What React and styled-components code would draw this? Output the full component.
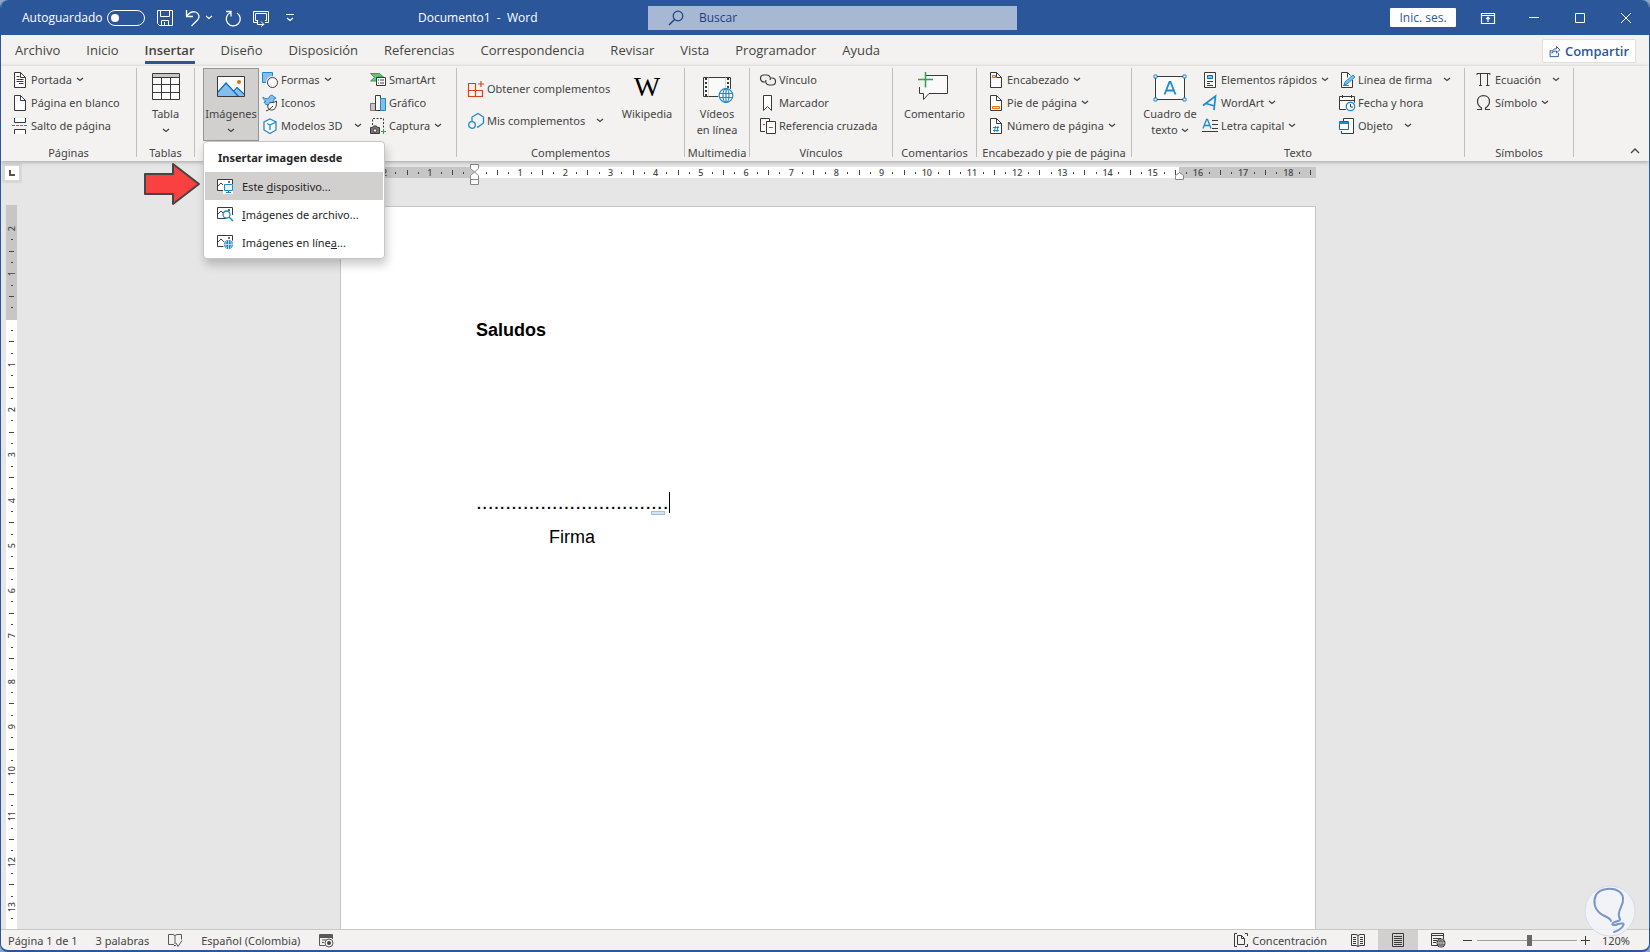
import styled, { createGlobalStyle, css } from "styled-components";

const GlobalStyle = createGlobalStyle`
  * {
    box-sizing: border-box;
  }
  body {
    margin: 0;
    background: #8fa6cb;
    font-family: "Open Sans", "Noto Sans", sans-serif;
    font-size: 12px;
    color: #444444;
  }
  button, input {
    font: inherit;
    color: inherit;
  }
  button {
    padding: 0;
    border: none;
    background: none;
    white-space: nowrap;
  }
`;

const ink = "#3b3a39";
const blue = "#1e8bcd";
const lightBlue = "#83beec";
const green = "#35a04a";
const orange = "#e8710a";

/* ---------- icons ---------- */

const icons = {
  cover: (
    <>
      <path d="M2.5.5h6l5 5v10h-11z" fill="#fff" stroke={ink} />
      <path d="M8.5.5v5h5M4.5 4.5h3M4.5 7.5h7M4.5 9.5h7M7 11.5h4.5" stroke={ink} />
    </>
  ),
  blank: (
    <>
      <path d="M2.5.5h6l5 5v10h-11z" fill="#fff" stroke={ink} />
      <path d="M8.5.5v5h5" stroke={ink} />
    </>
  ),
  pageBreak: (
    <>
      <path d="M2.5 0v4.5h11V0M2.5 16v-4.5h11V16" fill="#fff" stroke={ink} />
      <path d="M0 7.5h16" stroke={blue} strokeDasharray="3 1" />
    </>
  ),
  shapes: (
    <>
      <path d="M.5.5h10v10H.5z" fill={lightBlue} stroke={blue} />
      <circle cx="10.5" cy="10.5" r="6.5" fill="#f3f2f1" />
      <circle cx="10.5" cy="10.5" r="5" fill="#fafafa" stroke={ink} />
    </>
  ),
  iconSet: (
    <>
      <path
        d="M1 2c2 2 4 2 6 1 0-3 4-4 5-1l2 1-2 1c0 3-2 5-5 6-3 0-4-1-5-3l2-.5C2 5 1 4 1 2z"
        fill={lightBlue}
        stroke={blue}
      />
      <path d="M14.5 6c0 6-1 9-5 9s-5-5-2-7c2-1 5 0 7-2z" fill="#fafafa" stroke={ink} />
      <path d="M4 16c3-1 5-3 7-5" stroke={ink} />
    </>
  ),
  cube: (
    <>
      <path d="M8 1l6 3v8l-6 3.5L2 12V4z" fill="#fff" stroke={blue} strokeWidth="1.3" />
      <path d="M5 5.5L8 7l6-3M8 7v5" stroke={blue} strokeWidth="1.3" />
    </>
  ),
  smartArt: (
    <>
      <path d="M.5 1.5h9l4 3.5h-7v4H.5l4-3.5z" fill="#6cc07c" stroke={green} />
      <path d="M6.5 5.5h9v8h-9z" fill="#fff" stroke={ink} />
      <path d="M8 8h1M10 8h4M8 11h1M10 11h4" stroke={ink} />
    </>
  ),
  chart: (
    <>
      <path d="M.5 8.5h5v7h-5z" fill="#c8c6c4" stroke="#797775" />
      <path d="M5.5.5h5v15h-5z" fill="#fff" stroke={ink} />
      <path d="M10.5 3.5h5v12h-5z" fill={lightBlue} stroke={blue} />
    </>
  ),
  capture: (
    <>
      <path d="M2.5 7V.5h11V10" stroke={ink} strokeDasharray="2 1.5" />
      <path d="M.5 9.5h2l1-1.5h3l1 1.5h2v6h-9z" fill="#797775" stroke={ink} />
      <circle cx="5" cy="12.5" r="1.7" fill="#fff" stroke={ink} />
      <path d="M13.5 11v5M11 13.5h5" stroke={green} />
    </>
  ),
  addins: (
    <path d="M.5 2.5h7v13h-7zM.5 9.5h14v6h-14zM7.5 9.5v6M13 0v6M10 3h6" stroke="#d9461a" strokeWidth="1.2" />
  ),
  myAddins: (
    <>
      <path d="M4 8V4l6-3.5L15.5 4v6L10 14H9" stroke={blue} strokeWidth="1.3" />
      <circle cx="4" cy="12" r="3.3" fill="#f3f2f1" stroke={blue} strokeWidth="1.3" />
    </>
  ),
  link: (
    <g stroke={ink} strokeWidth="1.2">
      <path d="M5 10H4a3.5 3.5 0 010-7h3a3.5 3.5 0 013 5" />
      <path d="M11 6h1a3.5 3.5 0 010 7H9a3.5 3.5 0 01-3-5" />
    </g>
  ),
  bookmark: <path d="M3.5.5h8v15l-4-4-4 4z" fill="#fff" stroke={ink} />,
  crossRef: (
    <>
      <path d="M5 13.5H.5V.5h9V3" fill="#fff" stroke={ink} />
      <path d="M6.5 3.5h9v12h-9z" fill="#fff" stroke={ink} />
      <path d="M3 6.5h2M9 9.5h4" stroke="#e33b2e" />
    </>
  ),
  header: (
    <>
      <path d="M2.5.5h6l5 5v10h-11z" fill="#fff" stroke={ink} />
      <path d="M8.5.5v5h5" stroke={ink} />
      <path d="M4.5 3.5h3v2h-3z" fill="#ffd9a8" stroke={orange} />
    </>
  ),
  footer: (
    <>
      <path d="M2.5.5h6l5 5v10h-11z" fill="#fff" stroke={ink} />
      <path d="M8.5.5v5h5" stroke={ink} />
      <path d="M4.5 11.5h7v2h-7z" fill="#ffd9a8" stroke={orange} />
    </>
  ),
  pageNumber: (
    <>
      <path d="M2.5.5h6l5 5v10h-11z" fill="#fff" stroke={ink} />
      <path d="M8.5.5v5h5" stroke={ink} />
      <path d="M7.5 8L6.5 14M10 8L9 14M5 9.5h6M5 12.5h6" stroke={blue} />
    </>
  ),
  quickParts: (
    <>
      <path d="M2.5.5h11v15h-11z" fill="#fff" stroke={ink} />
      <path d="M5.5 3.5h5v3h-5z" fill={lightBlue} stroke="#0f6cbd" />
      <path d="M5 9.5h6M5 11.5h3M5 13.5h6" stroke={ink} />
    </>
  ),
  wordArt: <path d="M1 10.5L13.5 1 12 15M4 8.500l8.500 2.500" stroke={blue} strokeWidth="1.7" />,
  dropCap: (
    <>
      <path d="M1 10.5L4.5 1.5h1L9 10.5M2 7.5h6" stroke={blue} strokeWidth="1.3" />
      <path d="M10 2.5h6M10 6.5h6M10 10.5h6M0 13.5h16" stroke={ink} />
    </>
  ),
  signature: (
    <>
      <path d="M13.5 8v7.5h-11V.5h6l3 3" fill="#fff" stroke={ink} />
      <path d="M8.5.5v5" stroke={ink} />
      <path d="M5 13l1-3 8-7 2 2-8 7z" fill={lightBlue} stroke={blue} />
      <path d="M4 13.5h6" stroke={blue} />
    </>
  ),
  dateTime: (
    <>
      <path d="M.5 1.5h15v13H.5z" fill="#fff" stroke={ink} />
      <path d="M.5 5.5h15M3.5 0v3M12.5 0v3" stroke={ink} />
      <circle cx="11.5" cy="11.5" r="5.5" fill="#f3f2f1" />
      <circle cx="11.5" cy="11.5" r="4.2" fill="#fff" stroke={blue} strokeWidth="1.3" />
      <path d="M11.5 9v3H14" stroke={ink} />
    </>
  ),
  object: (
    <>
      <path d="M4.5 3V.5h10v15h-12V13" fill="#fff" stroke={ink} />
      <path d="M.5 3.5h9v8h-9z" fill="#fff" stroke="#0f6cbd" />
      <path d="M.5 5h9" stroke={blue} strokeWidth="2" />
    </>
  ),
  equation: (
    <path d="M1 3V1.5h13V3M4.5 2v11.5M11.5 2v11.5M3 13.5h3M10 13.5h3.5" stroke={ink} />
  ),
  symbol: (
    <path
      d="M1 14.5h4.5V13C2.5 11 1.5 9 1.5 6.5 1.5 3 4 .7 7.5.7s6 2.3 6 5.8c0 2.5-1 4.5-4 6.5v1.5H14"
      stroke={ink}
      strokeWidth="1.2"
    />
  ),
  device: (
    <>
      <path d="M.5 1.5h15v11H.5z" fill="#fff" stroke={ink} />
      <path d="M1 8l3-3 3 3" stroke={ink} />
      <path d="M11 4h2" stroke={ink} strokeWidth="1.5" />
      <path d="M6 6h10v10H6z" fill="#fff" />
      <path d="M7.5 6.5h8v6h-8zM11.5 12.5v2M9 14.5h5" fill="#eaf4fc" stroke={blue} />
    </>
  ),
  stock: (
    <>
      <path d="M.5 1.5h15v11H.5z" fill="#fff" stroke={ink} />
      <path d="M1 8l3-3 3 3" stroke={ink} />
      <path d="M11 4h2" stroke={ink} strokeWidth="1.5" />
      <path d="M9 9h8v6H9z" fill="#fff" />
      <circle cx="9.5" cy="8.5" r="3.5" fill="#fff" stroke={blue} strokeWidth="1.3" />
      <path d="M12 11l4 4" stroke={blue} strokeWidth="1.5" />
    </>
  ),
  online: (
    <>
      <path d="M.5 1.5h15v11H.5z" fill="#fff" stroke={ink} />
      <path d="M1 8l3-3 3 3" stroke={ink} />
      <path d="M11 4h2" stroke={ink} strokeWidth="1.5" />
      <circle cx="11.5" cy="10.5" r="5.5" fill="#fff" />
      <circle cx="11.5" cy="10.5" r="4.5" fill={blue} />
      <path d="M7 10.5h9M11.5 6v9M9.5 7c-1 2-1 5 0 7M13.5 7c1 2 1 5 0 7" stroke="#d5eafa" strokeWidth=".8" />
    </>
  ),
  save: (
    <path d="M.5.5h15v15h-13l-2-2zM3.5.5v6h9v-6M4.5 15.5v-5h7v5M7.5 12v3.5" stroke="#fff" />
  ),
  undo: <path d="M1.5 0v6.5H8M1.5 6.5C4 3 7 1 10.5 2c4 1.2 4.5 5.5 2 8l-6 6" stroke="#fff" strokeWidth="1.3" />,
  redo: <path d="M1 1.5h5v5M5.5 2.5a7 7 0 106.5.5" stroke="#fff" strokeWidth="1.3" />,
  present: (
    <path
      d="M12 12.5h3.5v-11H.5v11H4M12 10.5h1.5v-7h-11v7H4M4.5 10v4.5h6M8 11.5l3 3-3 2"
      stroke="#fff"
    />
  ),
  search: (
    <>
      <circle cx="10" cy="6" r="4.8" stroke="#1f3f7c" strokeWidth="1.2" />
      <path d="M6.5 9.5L1 15" stroke="#1f3f7c" strokeWidth="1.4" />
    </>
  ),
  ribbonOptions: <path d="M1.5 3.5h13v10h-13zM1.5 5.5h13M8 12V7M6 9l2-2 2 2" stroke="#fff" strokeWidth="1.2" />,
  minimize: <path d="M3 7.5h10" stroke="#fff" />,
  maximize: <path d="M3.5 3.5h9v9h-9z" stroke="#fff" />,
  close: <path d="M3 3l10 10M13 3L3 13" stroke="#fff" />,
  share: (
    <path d="M3.5 7.5h-2v8h11v-5M4 11c0-4 2-6 6-6V2l4.5 4.5L10 10.5V8c-3 0-4.5.5-6 3z" stroke="#2b579a" strokeWidth="1.3" />
  ),
  proofing: (
    <path d="M8 3.5L6 2.5H1.5v10h5L8 14l1-1M8 3.5l2-1h4.5v5M8 3.5V12M9 11l2 3.5 4-6" stroke="#5a5957" />
  ),
  macro: (
    <>
      <path d="M7 13.5H1.5v-11h13V7M1.5 5.5h13M4 8h4M4 10.5h2" stroke="#5a5957" />
      <path d="M1.5 4h13" stroke="#5a5957" strokeWidth="2" />
      <circle cx="11" cy="11" r="4" fill="#f3f2f1" stroke="#5a5957" />
      <circle cx="11" cy="11" r="2" fill="#444" />
    </>
  ),
  focus: (
    <path d="M4 1.5H1.5v13H4M12 1.5h2.5V4M12 14.5h2.5V12M4.5 3.5h4l3 3v6h-7zM8.5 3.5v3h3" stroke={ink} />
  ),
  read: (
    <path d="M8 3.5L6 2.5H1.5v11H6l2 1 2-1h4.5v-11H10zM8 3.5v11M3 5.5h3M3 7.5h3M3 9.5h3M3 11.5h3M10 5.5h3M10 7.5h3M10 9.5h3M10 11.5h3" stroke={ink} />
  ),
  print: (
    <path d="M2.5 1.5h11v13h-11zM4 4.5h8M4 6.5h8M4 8.5h8M4 10.5h8M4 12.5h8" stroke={ink} />
  ),
  web: (
    <>
      <path d="M8 13.5H1.5v-12h12V7M1.5 3.5h12M3 6.5h8M3 8.5h4M3 10.5h3" stroke={ink} />
      <circle cx="11" cy="11" r="4.5" fill={ink} />
      <path d="M7 11h8M11 7v8M9.5 7.5c-1 2-1 5 0 7M12.5 7.5c1 2 1 5 0 7" stroke="#ddd" strokeWidth=".8" />
    </>
  ),
};

function Icon({ name }) {
  return (
    <IconSvg viewBox="0 0 16 16" fill="none" aria-hidden="true">
      {icons[name]}
    </IconSvg>
  );
}

function Chevron({ up }) {
  return (
    <ChevronSvg viewBox={up ? "0 0 10 6" : "0 0 8 5"} fill="none" aria-hidden="true" $up={up}>
      <path d={up ? "M1 5l4-4 4 4" : "M1 1l3 2.5L7 1"} stroke="currentColor" strokeWidth="1.3" />
    </ChevronSvg>
  );
}

const bigIcons = {
  table: (
    <>
      <path d="M.5 1.5h27v26H.5z" fill="#fff" stroke={ink} />
      <path d="M1 2h26v3H1z" fill="#c8c6c4" />
      <path d="M.5 5.5h27M.5 12.5h27M.5 20.5h27M9.5 5.5v22M18.5 5.5v22" stroke={ink} />
    </>
  ),
  picture: (
    <>
      <path d="M.5 4.5h27v20H.5z" fill="#fafafa" />
      <path d="M1 20l8-9 8 9 4-4 6.5 6v2.5H1z" fill={lightBlue} />
      <path d="M1 20l8-9 12.5 13.5M16.5 19.5l3.5-4 7.5 7" stroke="#0f6cbd" strokeWidth="1.2" />
      <path d="M.5 4.5h27v20H.5z" stroke={ink} />
      <circle cx="22" cy="10" r="2" fill="#d9730d" />
    </>
  ),
  video: (
    <>
      <path d="M.5 5.5h27v19H.5z" fill="#fafafa" stroke={ink} />
      <path d="M3 6v18M25 6v18" stroke={ink} strokeWidth="2" strokeDasharray="2 2" />
      <path d="M5.5 5.5v19M22.5 5.5v19" stroke="#d0cecc" strokeWidth=".8" />
      <circle cx="23" cy="23.5" r="8" fill="#f3f2f1" />
      <g stroke={blue} strokeWidth="1.2">
        <circle cx="23" cy="23.5" r="6.8" fill="#fff" />
        <ellipse cx="23" cy="23.5" rx="3" ry="6.8" />
        <path d="M16.5 21.5h13M16.5 25.5h13M23 17v13" />
      </g>
    </>
  ),
  comment: (
    <>
      <path d="M-1.5 3.5h29v18H9l-5.5 6v-6h-4v-18z" fill="#fafafa" stroke={ink} />
      <path d="M-4 0H6v15H-4z" fill="#f3f2f1" />
      <path d="M5.5 0v15.5M-2 7.5h15" stroke={green} strokeWidth="1.5" />
    </>
  ),
  textBox: (
    <>
      <path d="M-.5 4.5h29v23h-29z" fill="#fafafa" stroke={ink} />
      <path d="M8.5 22.5L13.5 10h1l5 12.5M10 18.5h8" stroke={blue} strokeWidth="1.8" />
      <g fill="#fff" stroke={blue}>
        <path d="M-2 3h3v3h-3zM27 3h3v3h-3zM-2 26h3v3h-3zM27 26h3v3h-3z" />
      </g>
    </>
  ),
};

/* ---------- ribbon parts ---------- */

function Command({ icon, text, menu, split }) {
  return (
    <CommandButton type="button" $split={split}>
      <Icon name={icon} />
      <span>{text}</span>
      {(menu || split) && <Chevron />}
    </CommandButton>
  );
}

function BigCommand({ icon, lines, menu, active, children, ...rest }) {
  return (
    <BigButton type="button" $active={active} {...rest}>
      {children || (
        <BigSvg viewBox="0 0 28 28" fill="none" aria-hidden="true">
          {bigIcons[icon]}
        </BigSvg>
      )}
      {lines.map((line, i) => (
        <BigLine key={line}>
          {line}
          {menu && i > 0 && i === lines.length - 1 && <Chevron />}
        </BigLine>
      ))}
      {menu && lines.length === 1 && (
        <BigLine>
          <Chevron />
        </BigLine>
      )}
    </BigButton>
  );
}

function Group({ label, width, pad, children }) {
  return (
    <GroupBox $width={width} aria-label={label}>
      <GroupBody $pad={pad}>{children}</GroupBody>
      <GroupLabel>{label}</GroupLabel>
    </GroupBox>
  );
}

function ImageMenu() {
  return (
    <Menu role="menu" aria-label="Insertar imagen desde">
      <MenuTitle>Insertar imagen desde</MenuTitle>
      <MenuItem type="button" role="menuitem" $selected>
        <Icon name="device" />
        <span>
          Este <u>d</u>ispositivo...
        </span>
      </MenuItem>
      <MenuItem type="button" role="menuitem">
        <Icon name="stock" />
        <span>
          <u>I</u>mágenes de archivo...
        </span>
      </MenuItem>
      <MenuItem type="button" role="menuitem">
        <Icon name="online" />
        <span>
          Imágenes en líne<u>a</u>...
        </span>
      </MenuItem>
    </Menu>
  );
}

const tabs = [
  "Archivo",
  "Inicio",
  "Insertar",
  "Diseño",
  "Disposición",
  "Referencias",
  "Correspondencia",
  "Revisar",
  "Vista",
  "Programador",
  "Ayuda",
];

function TitleBar() {
  return (
    <TitleRow>
      <QuickAccess>
        <AutoSave>
          Autoguardado
          <Switch type="checkbox" />
        </AutoSave>
        <TitleButton type="button" aria-label="Guardar">
          <Icon name="save" />
        </TitleButton>
        <TitleButton type="button" aria-label="Deshacer">
          <Icon name="undo" />
          <Chevron />
        </TitleButton>
        <TitleButton type="button" aria-label="Rehacer">
          <Icon name="redo" />
        </TitleButton>
        <TitleButton type="button" aria-label="Presentación">
          <Icon name="present" />
        </TitleButton>
        <Customize type="button" aria-label="Personalizar">
          <Chevron />
        </Customize>
      </QuickAccess>
      <DocTitle>Documento1&nbsp; -&nbsp; Word</DocTitle>
      <SearchBox>
        <Icon name="search" />
        <SearchInput type="text" placeholder="Buscar" aria-label="Buscar" />
      </SearchBox>
      <WindowControls>
        <SignIn type="button">Inic. ses.</SignIn>
        {["ribbonOptions", "minimize", "maximize", "close"].map((name) => (
          <TitleButton type="button" key={name} aria-label={name}>
            <Icon name={name} />
          </TitleButton>
        ))}
      </WindowControls>
    </TitleRow>
  );
}

function Ribbon() {
  return (
    <RibbonRow>
      <Group label="Páginas" width={136} pad={11}>
        <Column>
          <Command icon="cover" text="Portada" menu />
          <Command icon="blank" text="Página en blanco" />
          <Command icon="pageBreak" text="Salto de página" />
        </Column>
      </Group>
      <Group label="Tablas" width={58}>
        <BigCommand icon="table" lines={["Tabla"]} menu />
      </Group>
      <Group width={262} pad={8}>
        <MenuAnchor>
          <BigCommand icon="picture" lines={["Imágenes"]} menu active aria-haspopup="menu" />
          <ImageMenu />
          <Pointer viewBox="0 0 58 44" aria-hidden="true">
            <path d="M2 12h28V2l26 20-26 20V32H2z" fill="#f94141" stroke="#454545" strokeWidth="2" strokeLinejoin="round" />
          </Pointer>
        </MenuAnchor>
        <Column $indent={3} $width={111}>
          <Command icon="shapes" text="Formas" menu />
          <Command icon="iconSet" text="Iconos" />
          <Command icon="cube" text="Modelos 3D" split />
        </Column>
        <Column>
          <Command icon="smartArt" text="SmartArt" />
          <Command icon="chart" text="Gráfico" />
          <Command icon="capture" text="Captura" menu />
        </Column>
      </Group>
      <Group label="Complementos" width={228} pad={11}>
        <Column $loose $width={151}>
          <Command icon="addins" text="Obtener complementos" />
          <Command icon="myAddins" text="Mis complementos" split />
        </Column>
        <BigCommand lines={["Wikipedia"]}>
          <Wiki>W</Wiki>
        </BigCommand>
      </Group>
      <Group label="Multimedia" width={65}>
        <BigCommand icon="video" lines={["Vídeos", "en línea"]} />
      </Group>
      <Group label="Vínculos" width={143} pad={10}>
        <Column>
          <Command icon="link" text="Vínculo" />
          <Command icon="bookmark" text="Marcador" />
          <Command icon="crossRef" text="Referencia cruzada" />
        </Column>
      </Group>
      <Group label="Comentarios" width={84}>
        <BigCommand icon="comment" lines={["Comentario"]} />
      </Group>
      <Group label="Encabezado y pie de página" width={155} pad={11}>
        <Column>
          <Command icon="header" text="Encabezado" menu />
          <Command icon="footer" text="Pie de página" menu />
          <Command icon="pageNumber" text="Número de página" menu />
        </Column>
      </Group>
      <Group label="Texto" width={333} pad={10}>
        <BigCommand icon="textBox" lines={["Cuadro de", "texto"]} menu />
        <Column $indent={4} $width={141}>
          <Command icon="quickParts" text="Elementos rápidos" menu />
          <Command icon="wordArt" text="WordArt" menu />
          <Command icon="dropCap" text="Letra capital" menu />
        </Column>
        <Column>
          <Command icon="signature" text="Línea de firma" split />
          <Command icon="dateTime" text="Fecha y hora" />
          <Command icon="object" text="Objeto" split />
        </Column>
      </Group>
      <Group label="Símbolos" width={109} pad={11}>
        <Column>
          <Command icon="equation" text="Ecuación" split />
          <Command icon="symbol" text="Símbolo" menu />
        </Column>
      </Group>
      <Collapse type="button" aria-label="Contraer la cinta">
        <Chevron up />
      </Collapse>
    </RibbonRow>
  );
}

// one mark for each quarter of a centimetre
function RulerMarks({ from, to, vertical }) {
  const marks = [];
  for (let q = from; q <= to; q++) marks.push(q);
  return marks.map((q) => {
    if (q === 0) return <Mark key={q} />;
    if (q % 4 === 0) {
      return (
        <Mark key={q} $vertical={vertical}>
          {Math.abs(q / 4)}
        </Mark>
      );
    }
    return (
      <Mark key={q}>
        <Tick $long={q % 2 === 0} $vertical={vertical} />
      </Mark>
    );
  });
}

function StatusBar() {
  return (
    <StatusRow>
      <StatusButton type="button">Página 1 de 1</StatusButton>
      <StatusButton type="button">3 palabras</StatusButton>
      <StatusButton type="button" aria-label="Revisión">
        <Icon name="proofing" />
      </StatusButton>
      <StatusButton type="button">Español (Colombia)</StatusButton>
      <StatusButton type="button" aria-label="Macros">
        <Icon name="macro" />
      </StatusButton>
      <StatusRight>
        <StatusButton type="button">
          <Icon name="focus" />
          Concentración
        </StatusButton>
        <Views>
          <ViewButton type="button" aria-label="Modo de lectura">
            <Icon name="read" />
          </ViewButton>
          <ViewButton type="button" aria-label="Diseño de impresión" $active>
            <Icon name="print" />
          </ViewButton>
          <ViewButton type="button" aria-label="Diseño web">
            <Icon name="web" />
          </ViewButton>
        </Views>
        <ZoomButton type="button" aria-label="Alejar">
          <svg width="9" height="9"><path d="M0 4.5h9" stroke={ink} /></svg>
        </ZoomButton>
        <ZoomRange type="range" min="10" max="190" defaultValue="104" aria-label="Zoom" />
        <ZoomButton type="button" aria-label="Acercar">
          <svg width="9" height="9"><path d="M0 4.5h9M4.5 0v9" stroke={ink} /></svg>
        </ZoomButton>
        <ZoomValue type="button">120%</ZoomValue>
      </StatusRight>
    </StatusRow>
  );
}

function App() {
  return (
    <>
      <GlobalStyle />
      <Window>
        <TitleBar />
        <TabRow>
          {tabs.map((tab) => (
            <Tab type="button" key={tab} $active={tab === "Insertar"}>
              {tab}
            </Tab>
          ))}
          <Share type="button">
            <Icon name="share" />
            Compartir
          </Share>
        </TabRow>
        <Ribbon />
        <Workspace>
          <SideRuler>
            <TabStop type="button" aria-label="Tabulación izquierda">
              <svg width="6" height="6"><path d="M1 0v5h5" fill="none" stroke="#555" strokeWidth="2" /></svg>
            </TabStop>
            <RulerColumn aria-hidden="true">
              <RulerMarks from={-8} to={53} vertical />
            </RulerColumn>
          </SideRuler>
          <Canvas>
            <TopRuler aria-hidden="true">
              <RulerMarks from={-11} to={74} />
              <LeftIndent viewBox="0 0 9 22">
                <path d="M.5.5h8v4L4.5 8 .5 4.5zM.5 15.5v-4l4-3.5 4 3.5v4zM.5 15.5h8v5h-8z" fill="#fff" stroke="#8a8886" />
              </LeftIndent>
              <RightIndent viewBox="0 0 9 8">
                <path d="M.5 7.5v-4l4-3 4 3v4z" fill="#fff" stroke="#8a8886" />
              </RightIndent>
            </TopRuler>
            <Page>
              <Greeting>Saludos</Greeting>
              <SignLine>
                {".".repeat(33)}
                <Caret />
                <Hint />
              </SignLine>
              <Signature>Firma</Signature>
            </Page>
          </Canvas>
        </Workspace>
        <StatusBar />
        <Bulb viewBox="0 0 52 52" aria-hidden="true">
          <circle cx="26" cy="26" r="25" fill="#f3f4f8" fillOpacity=".85" stroke="#d3dbea" />
          <path
            d="M27 36c-1-4-6-4-10-7C10 24 9 16 12 10 16 3 29 2 36 7c5 5 3 11 1 15-2 4-3 9-1 12 1 2-4 2-7 4-2 2 1 3 5 1 4-1 7-1 5 2-2 3-6 5-9 6"
            fill="none"
            stroke="#7896c8"
            strokeWidth="2"
            strokeLinecap="round"
          />
        </Bulb>
      </Window>
    </>
  );
}

export default App;

/* ---------- styles ---------- */

const Window = styled.div`
  position: relative;
  display: flex;
  flex-direction: column;
  height: 100vh;
  overflow: hidden;
  border: 1px solid #2b579a;
  border-top: none;
  border-bottom-width: 2px;
  border-radius: 8px;
  background: #f3f2f1;
`;

const IconSvg = styled.svg`
  flex: none;
  width: 16px;
  height: 16px;
  overflow: visible;
`;

const ChevronSvg = styled.svg`
  flex: none;
  width: ${(p) => (p.$up ? 10 : 8)}px;
  height: ${(p) => (p.$up ? 6 : 5)}px;
`;

const TitleRow = styled.header`
  display: grid;
  grid-template-columns: 417px 230px minmax(0, 369px) 1fr;
  align-items: center;
  height: 35px;
  flex: none;
  background: #2b579a;
  color: #ffffff;
`;

const QuickAccess = styled.div`
  display: flex;
  align-items: center;
  gap: 12px;
  padding-left: 21px;
`;

const AutoSave = styled.label`
  display: flex;
  align-items: center;
  gap: 5px;
`;

const Switch = styled.input`
  appearance: none;
  display: flex;
  align-items: center;
  width: 38px;
  height: 16px;
  margin: 0;
  padding: 0 3px;
  border: 1px solid #ffffff;
  border-radius: 8px;

  &::before {
    content: "";
    width: 8px;
    height: 8px;
    border-radius: 50%;
    background: #ffffff;
  }
`;

const TitleButton = styled.button`
  display: flex;
  align-items: center;
  gap: 4px;
`;

const Customize = styled(TitleButton)`
  margin-left: 5px;
  padding-top: 2px;
  border-top: 1px solid #ffffff;
`;

const DocTitle = styled.div`
  white-space: nowrap;
`;

const SearchBox = styled.label`
  display: flex;
  align-items: center;
  gap: 13px;
  height: 24px;
  padding-left: 20px;
  background: #a6b8d4;
`;

const SearchInput = styled.input`
  flex: 1;
  min-width: 0;
  border: none;
  outline: none;
  background: none;
  color: #1f3f7c;

  &::placeholder {
    color: #1f3f7c;
    opacity: 1;
  }
`;

const WindowControls = styled.div`
  display: flex;
  align-items: center;
  justify-content: flex-end;
  gap: 30px;
  padding-right: 15px;
`;

const SignIn = styled.button`
  height: 19px;
  width: 66px;
  margin-right: -6px;
  border-radius: 1px;
  background: #ffffff;
  color: #2b579a;
`;

const TabRow = styled.nav`
  display: flex;
  align-items: center;
  gap: 26px;
  flex: none;
  height: 31px;
  padding: 0 13px 0 14px;
`;

const Tab = styled.button`
  height: 26px;
  padding-top: 2px;
  border-bottom: 3px solid transparent;
  font-size: 13px;
  line-height: 18px;

  ${(p) =>
    p.$active &&
    css`
      border-color: #2b579a;
      font-weight: 600;
    `}
`;

const Share = styled.button`
  display: flex;
  align-items: center;
  justify-content: center;
  gap: 4px;
  width: 94px;
  height: 24px;
  margin-left: auto;
  border: 1px solid #e1dfdd;
  border-radius: 2px;
  background: #ffffff;
  color: #2b579a;
  font-size: 13px;
  font-weight: 600;

  svg {
    width: 12px;
    height: 12px;
  }
`;

const RibbonRow = styled.section`
  position: relative;
  z-index: 2;
  display: flex;
  flex: none;
  height: 95px;
  padding-top: 2px;
  background: #f3f2f1;
  box-shadow: 0 1px 4px rgba(0, 0, 0, 0.3);
  font-family: "Noto Sans", sans-serif;
  font-size: 11px;
`;

const GroupBox = styled.div`
  display: flex;
  flex-direction: column;
  flex: none;
  width: ${(p) => p.$width}px;
  height: 89px;
  border-right: 1px solid #c0bebc;
`;

const GroupBody = styled.div`
  display: flex;
  flex: none;
  height: 76px;
  padding-left: ${(p) => p.$pad || 0}px;
  justify-content: ${(p) => (p.$pad ? "flex-start" : "center")};
`;

const GroupLabel = styled.div`
  flex: none;
  line-height: 18px;
  text-align: center;
  white-space: nowrap;
`;

const Column = styled.div`
  display: flex;
  flex-direction: column;
  align-items: flex-start;
  gap: ${(p) => (p.$loose ? 9 : 0)}px;
  padding-top: ${(p) => (p.$loose ? 9 : 0)}px;
  padding-left: ${(p) => p.$indent || 0}px;
  width: ${(p) => (p.$width ? `${p.$width}px` : "auto")};
`;

const CommandButton = styled.button`
  display: flex;
  align-items: center;
  gap: 3px;
  height: 23px;

  span + svg {
    margin-left: ${(p) => (p.$split ? 8 : 1)}px;
  }
`;

const BigButton = styled.button`
  display: flex;
  flex-direction: column;
  align-items: center;
  min-width: 56px;
  height: 73px;
  padding-top: 3px;
  border: 1px solid ${(p) => (p.$active ? "#979593" : "transparent")};
  background: ${(p) => (p.$active ? "#d2d0ce" : "transparent")};
`;

const BigSvg = styled.svg`
  width: 28px;
  height: 28px;
  margin-bottom: 6px;
  overflow: visible;
`;

const BigLine = styled.span`
  display: flex;
  align-items: center;
  gap: 3px;
  line-height: 16px;
  min-height: 16px;
`;

const Wiki = styled.span`
  height: 34px;
  font-family: "Liberation Serif", serif;
  font-size: 28px;
  line-height: 30px;
  color: #000000;
`;

const MenuAnchor = styled.div`
  position: relative;
`;

const Menu = styled.div`
  position: absolute;
  top: 73px;
  left: 0;
  width: 182px;
  padding: 1px 1px 2px;
  border: 1px solid #c8c6c4;
  border-radius: 4px;
  background: #ffffff;
  box-shadow: 2px 6px 10px rgba(0, 0, 0, 0.2);
  color: #262626;
`;

const MenuTitle = styled.div`
  padding-left: 13px;
  line-height: 29px;
  font-weight: 700;
`;

const MenuItem = styled.button`
  display: flex;
  align-items: center;
  gap: 9px;
  width: 100%;
  height: 28px;
  padding-left: 12px;
  background: ${(p) => (p.$selected ? "#d2d0ce" : "transparent")};
`;

const Pointer = styled.svg`
  position: absolute;
  top: 94px;
  left: -60px;
  width: 58px;
  height: 44px;
`;

const Collapse = styled.button`
  align-self: flex-end;
  margin: 0 9px 4px auto;
`;

const Workspace = styled.main`
  display: flex;
  flex: 1;
  min-height: 0;
  background: #e6e6e6;
`;

const SideRuler = styled.div`
  display: flex;
  flex-direction: column;
  align-items: flex-start;
  flex: none;
  width: 22px;
  padding-top: 2px;
`;

const TabStop = styled.button`
  display: grid;
  place-items: center;
  width: 20px;
  height: 20px;
  margin-bottom: 22px;
  margin-left: 1px;
  border: 3px solid #d8d8d8;
  background: #ffffff;
`;

const RulerColumn = styled.div`
  display: flex;
  flex-direction: column;
  flex: 1;
  width: 11px;
  margin-left: 5px;
  padding: 18px 0 5px;
  background: linear-gradient(#c6c6c6 115px, #ffffff 115px);
`;

const Canvas = styled.div`
  display: flex;
  flex-direction: column;
  align-items: center;
  flex: 1;
  min-width: 0;
  padding: 6px 16px 0 0;
`;

const TopRuler = styled.div`
  position: relative;
  display: flex;
  width: 976px;
  height: 11px;
  margin-bottom: 28px;
  padding-left: 5px;
  background: linear-gradient(90deg, #c6c6c6 135px, #ffffff 135px, #ffffff 839px, #c6c6c6 839px);
`;

const Mark = styled.span`
  display: flex;
  align-items: center;
  justify-content: center;
  flex: 1 1 0;
  min-width: 0;
  min-height: 0;
  font-family: "Noto Sans", sans-serif;
  font-size: 9px;
  font-weight: 500;
  line-height: 11px;
  writing-mode: ${(p) => (p.$vertical ? "vertical-rl" : "horizontal-tb")};
  transform: ${(p) => (p.$vertical ? "rotate(180deg)" : "none")};
`;

const Tick = styled.i`
  flex: none;
  width: ${(p) => (p.$vertical ? (p.$long ? 5 : 2) : 1)}px;
  height: ${(p) => (p.$vertical ? 1 : p.$long ? 5 : 2)}px;
  background: #444444;
`;

const LeftIndent = styled.svg`
  position: absolute;
  top: -3px;
  left: 130px;
  width: 9px;
  height: 22px;
`;

const RightIndent = styled.svg`
  position: absolute;
  top: 5px;
  left: 835px;
  width: 9px;
  height: 8px;
`;

const Page = styled.article`
  flex: 1;
  width: 976px;
  padding: 111px 135px 0;
  border: 1px solid #c6c6c6;
  border-bottom: none;
  background: #ffffff;
  font-family: "Liberation Sans", Arial, sans-serif;
  font-size: 18px;
  line-height: 24px;
  color: #000000;
`;

const Greeting = styled.p`
  margin: 0 0 148px;
  font-weight: 700;
`;

const SignLine = styled.p`
  position: relative;
  display: inline-block;
  margin: 0;
  font-size: 21px;
`;

const Caret = styled.span`
  position: absolute;
  right: -1px;
  bottom: 1px;
  width: 1px;
  height: 21px;
  background: #000000;
`;

const Hint = styled.span`
  position: absolute;
  right: 4px;
  bottom: -1px;
  width: 14px;
  height: 4px;
  border: 1px solid #9cc3e0;
  background: #d5e6f3;
`;

const Signature = styled.p`
  margin: 10px 0 0;
  padding-left: 73px;
`;

const StatusRow = styled.footer`
  display: flex;
  align-items: center;
  gap: 18px;
  flex: none;
  height: 21px;
  padding-left: 7px;
  border-top: 1px solid #c6c6c6;
  font-family: "Noto Sans", sans-serif;
  font-size: 11px;
`;

const StatusButton = styled.button`
  display: flex;
  align-items: center;
  gap: 3px;
`;

const StatusRight = styled.div`
  display: flex;
  align-items: center;
  height: 100%;
  margin-left: auto;
  padding-right: 19px;
`;

const Views = styled.div`
  display: flex;
  height: 100%;
  margin: 0 5px 0 11px;
`;

const ViewButton = styled.button`
  display: grid;
  place-items: center;
  width: 40px;
  height: 100%;
  background: ${(p) => (p.$active ? "#d2d0ce" : "transparent")};
`;

const ZoomButton = styled.button`
  display: flex;
`;

const ZoomRange = styled.input`
  appearance: none;
  width: 100px;
  height: 11px;
  margin: 0 4px 0 5px;
  background: linear-gradient(#a19f9d, #a19f9d) center / 100% 1px no-repeat;

  &::-webkit-slider-thumb {
    appearance: none;
    width: 5px;
    height: 11px;
    background: #6b6a68;
  }
`;

const ZoomValue = styled.button`
  margin-left: 12px;
`;

const Bulb = styled.svg`
  position: absolute;
  right: 13px;
  bottom: 13px;
  width: 52px;
  height: 52px;
`;
